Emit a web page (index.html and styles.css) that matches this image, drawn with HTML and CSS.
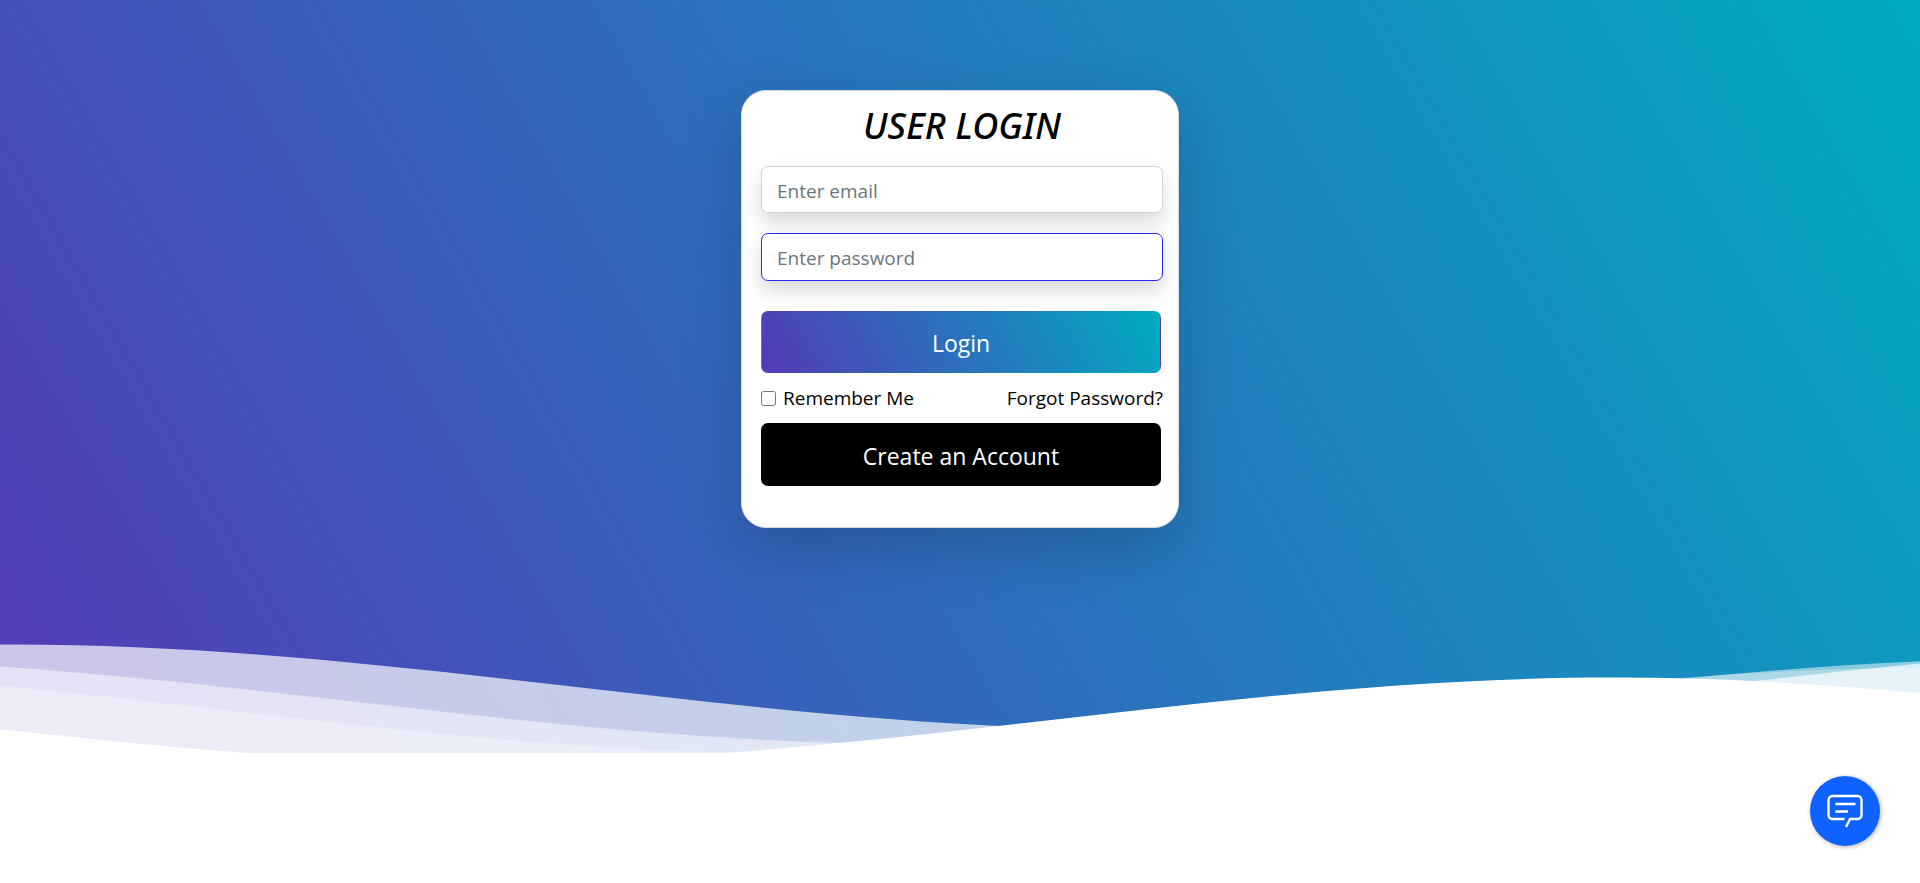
FILE: index.html
```html
<!DOCTYPE html>
<html lang="en">
<head>
<meta charset="utf-8">
<title>User Login</title>
<link rel="stylesheet" href="styles.css">
</head>
<body>
<main class="hero">
  <form class="card">
    <h1 class="title">USER LOGIN</h1>
    <input class="field" type="email" placeholder="Enter email" aria-label="Email">
    <input class="field field-active" type="password" placeholder="Enter password" aria-label="Password">
    <button class="btn btn-login" type="submit">Login</button>
    <div class="options">
      <label class="remember" for="remember"><input class="check" type="checkbox" id="remember">Remember Me</label>
      <a class="forgot" href="#">Forgot Password?</a>
    </div>
    <button class="btn btn-create" type="button">Create an Account</button>
  </form>
  <svg class="waves" viewBox="0 24 150 28" preserveAspectRatio="none" aria-hidden="true">
    <defs>
      <path id="wave" d="M-160 44c30 0 58-18 88-18s58 18 88 18 58-18 88-18 58 18 88 18v44h-352z"/>
    </defs>
    <use href="#wave" x="73" y="0" fill="rgba(255,255,255,0.7)"/>
    <use href="#wave" x="55.4" y="3" fill="rgba(255,255,255,0.5)"/>
    <use href="#wave" x="46" y="5" fill="rgba(255,255,255,0.3)"/>
    <use href="#wave" x="22" y="7" fill="#fff"/>
  </svg>
</main>
<button class="chat" type="button" aria-label="Open chat">
  <svg class="chat-icon" viewBox="0 0 36 34" fill="none" stroke="#fff" stroke-width="2.4" aria-hidden="true">
    <path d="M17.5 25H5.500a4 4 0 0 1-4-4V6a4 4 0 0 1 4-4h25a4 4 0 0 1 4 4v15a4 4 0 0 1-4 4H23l-4 8"/>
    <path d="M8.500 10h20M8.500 17.500h12.500"/>
  </svg>
</button>
</body>
</html>
```
FILE: styles.css
```css
* {
  box-sizing: border-box;
}

body {
  margin: 0;
  background: #fff;
  color: #000;
  font-family: "Open Sans", "Noto Sans", sans-serif;
  font-size: 19px;
}

.hero {
  display: flex;
  flex-direction: column;
  align-items: center;
  padding-top: 90px;
  overflow: hidden;
  background: linear-gradient(60deg, #543ab7 0%, #00acc1 100%);
}

.card {
  display: flex;
  flex-direction: column;
  width: 438px;
  max-width: 100%;
  padding: 15px 15px 41px 19px;
  border: 1px solid #d5dbe5;
  border-radius: 25px;
  background: #fff;
  box-shadow: 0 20px 60px rgba(0, 0, 0, 0.18);
}

.title {
  margin: 0 0 20px;
  font-family: "Noto Sans", sans-serif;
  font-size: 36px;
  font-style: italic;
  font-weight: 500;
  line-height: 40px;
  text-align: center;
}

.field {
  width: 100%;
  height: 47px;
  margin-bottom: 20px;
  padding: 2px 15px 0;
  border: 1px solid #ced4da;
  border-radius: 7px;
  outline: 0;
  background: #fff;
  box-shadow: 0 10px 20px rgba(0, 0, 0, 0.15);
  font-family: inherit;
  font-size: 19px;
}

.field::placeholder {
  color: #6c757d;
  opacity: 1;
}

.field-active {
  height: 48px;
  margin-bottom: 30px;
  border-color: #2b2bf0;
}

.btn {
  height: 62px;
  margin-right: 2px;
  padding: 2px 0 0;
  border: 1px solid transparent;
  border-radius: 7px;
  color: #fff;
  font-family: inherit;
  font-size: 23px;
}

.btn-login {
  background: linear-gradient(60deg, #543ab7 0%, #00acc1 100%);
}

.btn-create {
  height: 63px;
  background: #000;
}

.options {
  display: flex;
  align-items: center;
  justify-content: space-between;
  height: 50px;
}

.remember {
  display: flex;
  align-items: center;
  gap: 7px;
}

.check {
  width: 15px;
  height: 15px;
  margin: 0;
}

.forgot {
  color: #000;
  text-decoration: none;
}

.waves {
  display: block;
  width: 100%;
  height: 15vh;
  margin-top: 107px;
  margin-bottom: -14px;
}

.chat {
  position: fixed;
  right: 40px;
  bottom: 37px;
  display: flex;
  align-items: center;
  justify-content: center;
  width: 70px;
  height: 70px;
  padding: 0;
  border: 0;
  border-radius: 50%;
  background: #0f62fe;
  box-shadow: 1px 1px 5px rgba(0, 0, 0, 0.3);
}

.chat-icon {
  width: 36px;
  height: 34px;
}
```
